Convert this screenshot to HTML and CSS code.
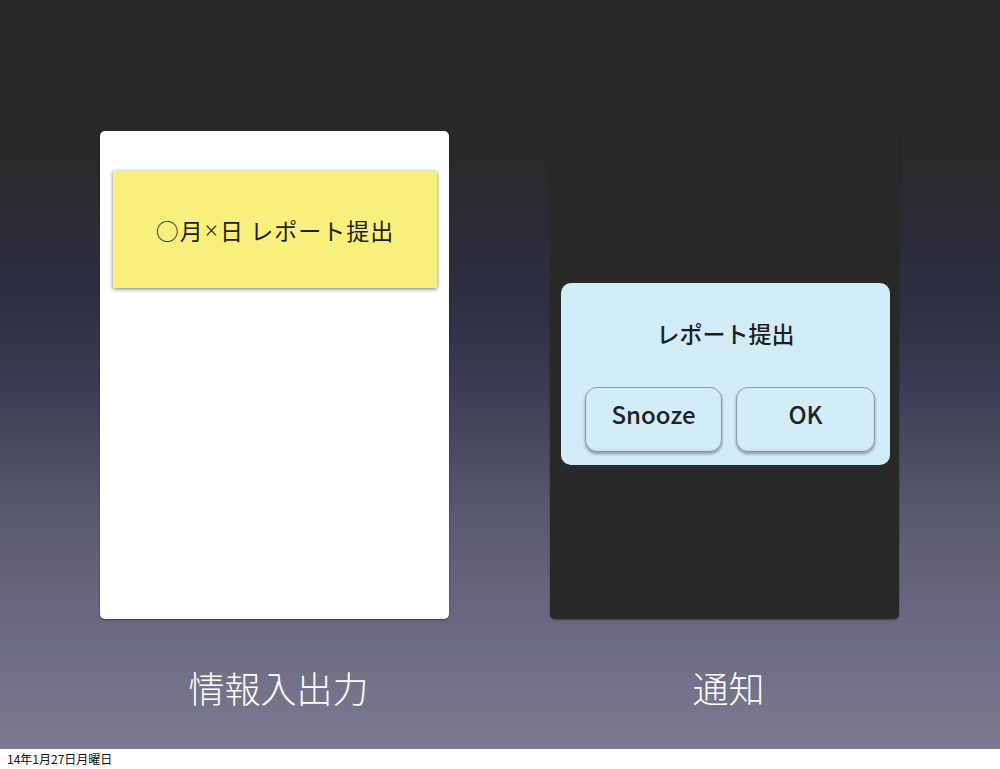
FILE: index.html
```html
<!DOCTYPE html>
<html>

	<head>
		<meta charset="utf-8" />
		<title>情報入出力と通知</title>
		<link rel="stylesheet" href="styles.css">
	</head>

	<body>
		<div class="slide">
			<!--左側：情報入出力-->
			<div class="column">
				<div class="card card-light">
					<div class="note">○月<span class="times">×</span>日 レポート提出</div>
				</div>
				<p class="label">情報入出力</p>
			</div>
			<!--右側：通知-->
			<div class="column">
				<div class="card card-dark">
					<div class="dialog">
						<div class="dialog-title">レポート提出</div>
						<div class="dialog-buttons">
							<a href="javascript:;" class="btn btn-snooze">Snooze</a>
							<a href="javascript:;" class="btn btn-ok">OK</a>
						</div>
					</div>
				</div>
				<p class="label">通知</p>
			</div>
		</div>
		<div class="footer">14年1月27日月曜日</div>
	</body>

</html>
```

FILE: styles.css
```css
* {
	margin: 0;
	padding: 0;
	text-decoration: none;
	box-sizing: border-box;
}

body {
	width: 1000px;
	font-family: "Noto Sans CJK JP", "Noto Sans", sans-serif;
	background: #fff;
}

.slide {
	height: 749px;
	display: flex;
	gap: 101px;
	padding: 131px 0 0 100px;
	background: linear-gradient(to bottom, #282828 0, #292929 150px, #2d2f42 300px, #3a3b52 380px, #5a5a70 520px, #6e6d86 650px, #7a7a90 749px);
}

.column {
	width: 349px;
	display: flex;
	flex-direction: column;
	align-items: center;
}

.card {
	width: 349px;
	height: 488px;
	border-radius: 5px;
	box-shadow: 0 1px 2px rgba(0, 0, 0, .4);
}

.card-light {
	background: #fff;
	padding: 40px 12px 0 13px;
}

.card-dark {
	background: #292929;
	padding: 152px 9px 0 11px;
}

/*付箋*/
.note {
	height: 117px;
	background: #f9ef7c;
	box-shadow: 0 1px 4px rgba(0, 0, 0, .55);
	display: flex;
	align-items: center;
	justify-content: center;
	font-size: 23px;
	letter-spacing: 1px;
	color: #1e1e1e;
	padding-top: 1px;
	white-space: pre;
}

.note .times {
	font-family: "Noto Sans", sans-serif;
	font-weight: 300;
	padding: 0 1px;
}

/*通知ダイアログ*/
.dialog {
	height: 182px;
	background: #d2ecf8;
	border-radius: 10px;
	padding: 0 15px 13px 24px;
	display: flex;
	flex-direction: column;
}

.dialog-title {
	height: 104px;
	display: flex;
	align-items: center;
	justify-content: center;
	font-size: 23px;
	font-weight: 500;
	color: #1e1e1e;
	padding-right: 9px;
	padding-bottom: 4px;
}

.dialog-buttons {
	flex: 1;
	display: flex;
	gap: 14px;
}

.btn {
	flex: 1;
	display: flex;
	align-items: center;
	justify-content: center;
	padding-bottom: 12px;
	border: 1px solid #8d9ca3;
	border-radius: 12px;
	background: #d2ecf8;
	box-shadow: 0 2px 3px rgba(0, 0, 0, .35), inset 0 -1px 2px rgba(0, 0, 0, .08);
	font-size: 24px;
	font-weight: 500;
	color: #1e2226;
}

.btn-snooze {
	flex: 137;
}

.btn-ok {
	flex: 139;
}

.label {
	margin-top: 50px;
	padding-left: 8px;
	font-size: 36px;
	font-weight: 300;
	line-height: 1;
	color: #fff;
}

.footer {
	height: 20px;
	padding: 2px 0 0 7px;
	font-size: 12px;
	line-height: 16px;
	color: #111;
}
```
